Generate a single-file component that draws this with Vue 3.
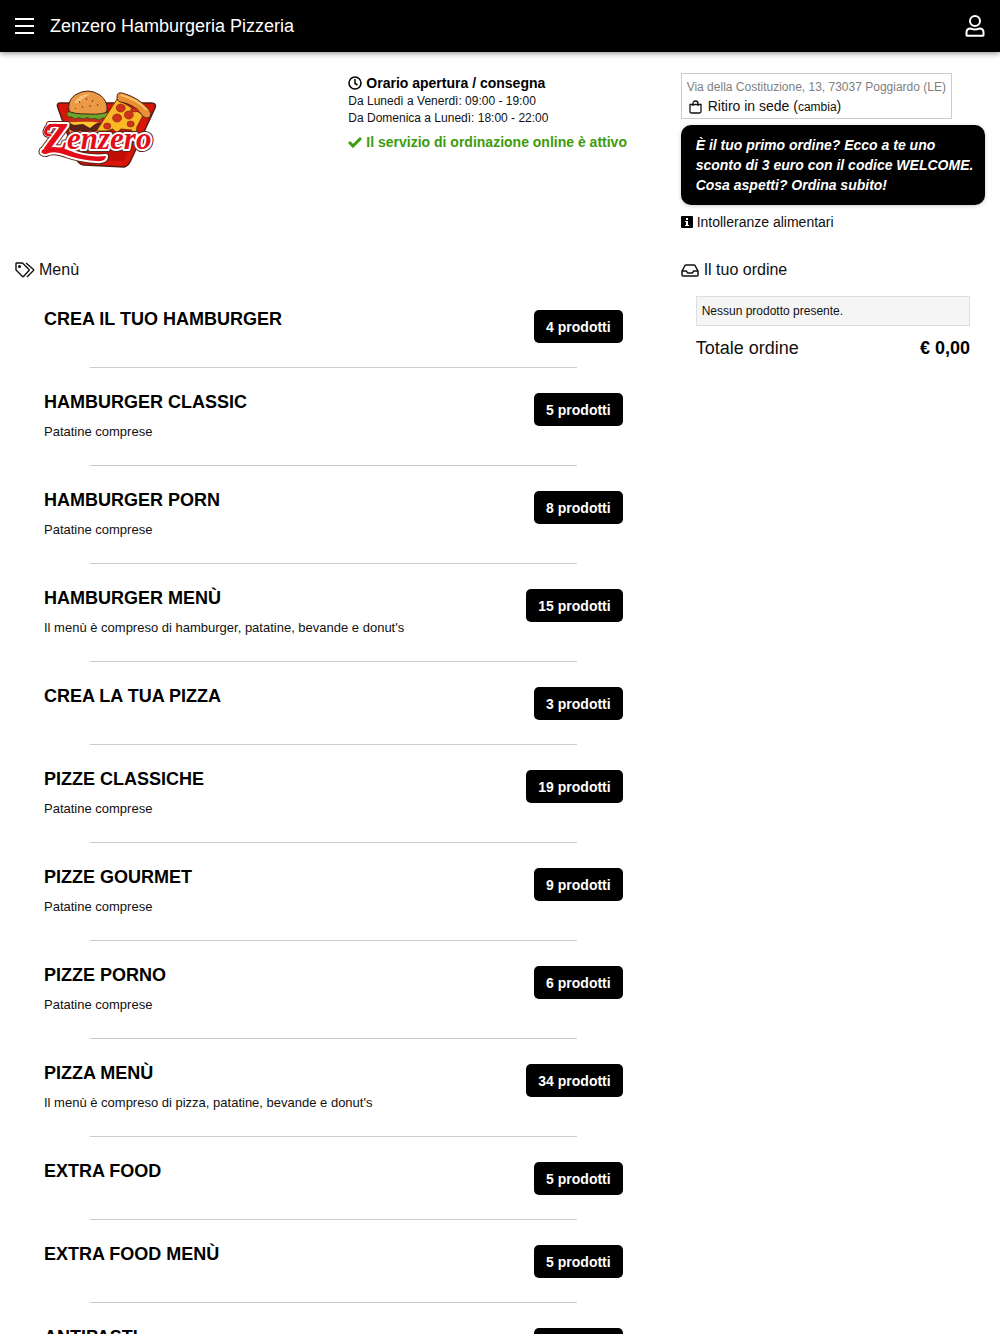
<script setup>
const hours = ['Da Lunedì a Venerdì: 09:00 - 19:00', 'Da Domenica a Lunedì: 18:00 - 22:00']

const categories = [
  { name: 'CREA IL TUO HAMBURGER', count: 4 },
  { name: 'HAMBURGER CLASSIC', note: 'Patatine comprese', count: 5 },
  { name: 'HAMBURGER PORN', note: 'Patatine comprese', count: 8 },
  { name: 'HAMBURGER MENÙ', note: "Il menù è compreso di hamburger, patatine, bevande e donut's", count: 15 },
  { name: 'CREA LA TUA PIZZA', count: 3 },
  { name: 'PIZZE CLASSICHE', note: 'Patatine comprese', count: 19 },
  { name: 'PIZZE GOURMET', note: 'Patatine comprese', count: 9 },
  { name: 'PIZZE PORNO', note: 'Patatine comprese', count: 6 },
  { name: 'PIZZA MENÙ', note: "Il menù è compreso di pizza, patatine, bevande e donut's", count: 34 },
  { name: 'EXTRA FOOD', count: 5 },
  { name: 'EXTRA FOOD MENÙ', count: 5 },
  { name: 'ANTIPASTI', count: 8 },
]
</script>

<template>
  <div class="page">
    <header class="topbar">
      <button class="icon-button" type="button" aria-label="Apri menu">
        <svg width="20" height="18" viewBox="0 0 20 18"><path d="M0 2h19M0 9h19M0 16h19" stroke="#fff" stroke-width="2" /></svg>
      </button>
      <h1 class="brand">Zenzero Hamburgeria Pizzeria</h1>
      <a class="account" href="#account" aria-label="Account">
        <svg width="20" height="22" viewBox="0 0 20 22" fill="none" stroke="#fff" stroke-width="2">
          <circle cx="10" cy="6" r="5" />
          <path d="M1.500 20v-2.600Q1.500 13.500 5.500 13.500Q8 14.400 10 14.400T14.500 13.500Q18.500 13.500 18.500 17.400V20Q18.500 20.700 18 20.700H2Q1.500 20.700 1.500 20Z" />
        </svg>
      </a>
    </header>

    <section class="intro">
      <a class="logo" href="#home" aria-label="Zenzero">
        <svg width="120" height="84" viewBox="0 0 120 84">
          <path d="M22 15Q18 15 20 20L38 70Q40 76 46 77L86 79Q90 78 92 74L117 20Q119 15 113 15Z" fill="#d91508" stroke="#551b12" stroke-width="1.500" />
          <path d="M28 20H108L86 73H49Z" fill="#c10e07" />
          <!-- hamburger -->
          <g transform="translate(3 0)">
            <path d="M28 38Q26 47 33 48H56Q63 46 60 38Z" fill="#e9953c" stroke="#4a2115" />
            <path d="M27 34H62Q64 41 58 43H31Q26 41 27 34Z" fill="#5a2118" />
            <path d="M27 34L61 33L54 36L49 40L42 36L33 37Z" fill="#ffc72e" />
            <path d="M27 30Q44 26 62 31V35Q44 32 27 34Z" fill="#c9281b" />
            <path d="M27 24Q44 22 66 25Q70 28 65 30Q61 29 58 32Q54 29 50 31Q46 28 42 31Q38 28 34 31Q31 28 28 29Q24 27 27 24Z" fill="#69a52a" stroke="#2b5519" stroke-width=".7" />
            <path d="M28 23Q26 13 34 7Q47-1 59 7Q67 13 66 23Q64 27 47 26Q31 26 28 23Z" fill="#eb9944" stroke="#4a2115" />
            <path d="M33 15Q39 5 50 6Q42 9 38 15Z" fill="#f8bf78" />
            <path d="M38 13l1 2M45 10l1 2M52 12l-1 2M57 16l-1 2M41 18l1 2M49 17v2M34 20l1 1" stroke="#7e3c16" />
          </g>
          <!-- pizza slice -->
          <g transform="translate(8 0) scale(.9 1)">
            <path d="M79 11L56 43L67 43L74 41L79 45L83 41L95 42L97 49L100 50L101 39L108 27Z" fill="#f9b824" stroke="#763112" />
            <path d="M79 8Q79 4 85 5Q104 10 115 22Q119 30 111 30Q107 29 104 24Q96 16 83 14Q78 13 79 8Z" fill="#e99035" stroke="#4a2115" />
            <path d="M83 7Q101 11 112 22" fill="none" stroke="#fbc170" stroke-width="2" />
            <g fill="#cf321b" stroke="#8d2414" stroke-width=".7">
              <ellipse cx="83" cy="20" rx="5" ry="4" /><ellipse cx="92" cy="27" rx="5" ry="4" />
              <ellipse cx="79" cy="30" rx="5" ry="4" /><ellipse cx="94" cy="36" rx="4" ry="3" />
              <ellipse cx="68" cy="38" rx="4" ry="3" /><ellipse cx="98" cy="22" rx="4" ry="2" />
            </g>
          </g>
          <!-- wordmark with its swash -->
          <g class="wordmark">
            <path class="rim" d="M12 47Q5 47 9 40Q13 36 22 38M4 62Q14 56 30 62Q48 70 68 68Q68 74 58 73Q42 72 28 67Q16 62 8 66Q2 66 4 62Z" />
            <text class="rim" x="6" y="62" font-size="40">Z</text>
            <text class="rim" x="29" y="61" font-size="31">enzero</text>
            <path class="halo" d="M12 47Q5 47 9 40Q13 36 22 38M4 62Q14 56 30 62Q48 70 68 68Q68 74 58 73Q42 72 28 67Q16 62 8 66Q2 66 4 62Z" />
            <text class="halo" x="6" y="62" font-size="40">Z</text>
            <text class="halo" x="29" y="61" font-size="31">enzero</text>
            <path class="ink" d="M12 47Q5 47 9 40Q13 36 22 38" />
            <path class="swash" d="M4 62Q14 56 30 62Q48 70 68 68Q68 74 58 73Q42 72 28 67Q16 62 8 66Q2 66 4 62Z" />
            <text x="6" y="62" font-size="40">Z</text>
            <text x="29" y="61" font-size="31">enzero</text>
          </g>
        </svg>
      </a>

      <div class="hours">
        <h2 class="hours-title">
          <svg width="14" height="14" viewBox="0 0 14 14" fill="none" stroke="#000" stroke-width="1.500"><circle cx="7" cy="7" r="6" /><path d="M7 3v4.500l2.500 1.500" /></svg>
          Orario apertura / consegna
        </h2>
        <p v-for="line in hours" :key="line" class="hours-line">{{ line }}</p>
        <p class="active">
          <svg width="14" height="12" viewBox="0 0 14 12"><path d="M1 6l4 4 8-8" fill="none" stroke="#3e9b0b" stroke-width="3" /></svg>
          Il servizio di ordinazione online è attivo
        </p>
      </div>

      <div class="info">
        <div class="pickup">
          <p class="address">Via della Costituzione, 13, 73037 Poggiardo (LE)</p>
          <p class="mode">
            <svg width="13" height="14" viewBox="0 0 13 14" fill="none" stroke="#111" stroke-width="1.300"><path d="M1 4.500h11v7q0 1.500-1.500 1.500h-8q-1.500 0-1.500-1.500ZM4 6V3.500Q4 1 6.500 1T9 3.500V6" /></svg>
            <span>Ritiro in sede (<a href="#cambia">cambia</a>)</span>
          </p>
        </div>
        <p class="promo">È il tuo primo ordine? Ecco a te uno sconto di 3 euro con il codice WELCOME. Cosa aspetti? Ordina subito!</p>
        <a class="allergens" href="#intolleranze">
          <svg width="12" height="12" viewBox="0 0 12 12"><rect width="12" height="12" rx="1" /><path d="M5 2h2v2H5zM4 5h3v4h1v1H4V9h1V6H4z" fill="#fff" /></svg>
          Intolleranze alimentari
        </a>
      </div>
    </section>

    <main class="content">
      <section class="menu">
        <h2 class="section-title">
          <svg width="20" height="16" viewBox="0 0 20 16" fill="none" stroke="#111" stroke-width="1.400" stroke-linejoin="round"><path d="M1 1.500Q1 1 1.500 1H7.500L14 7.500Q14.500 8 14 8.500L8.500 14.500Q8 15 7.500 14.500L1 8ZM11 1L18.500 7.500Q19 8 18.500 8.500L12 15" /><circle cx="4.500" cy="4.500" r=".8" fill="#111" /></svg>
          Menù
        </h2>
        <ul class="categories">
          <li v-for="category in categories" :key="category.name" class="category">
            <div class="row">
              <div>
                <h3 class="name">{{ category.name }}</h3>
                <p v-if="category.note" class="note">{{ category.note }}</p>
              </div>
              <button class="count" type="button">{{ category.count }} prodotti</button>
            </div>
            <hr class="rule" />
          </li>
        </ul>
      </section>

      <aside class="order">
        <h2 class="section-title">
          <svg width="19" height="13" viewBox="0 0 19 13" fill="none" stroke="#111" stroke-width="1.500" stroke-linejoin="round"><path d="M1 7L4 1.500Q4.300 1 5 1H13Q13.700 1 14 1.500L17 7V11Q17 12 16 12H2Q1 12 1 11ZM1 7H5.500L6.500 9H11.500L12.500 7H17" /></svg>
          Il tuo ordine
        </h2>
        <div class="cart">
          <p class="empty">Nessun prodotto presente.</p>
          <p class="total"><span>Totale ordine</span><strong>€ 0,00</strong></p>
        </div>
      </aside>
    </main>
  </div>
</template>

<style>
body {
  margin: 0;
  background: #fff;
}
</style>

<style scoped>
.page {
  color: #111;
  font-family: "Liberation Sans", Arial, sans-serif;
  font-size: 14px;
}
h1, h2, h3, p, ul {
  margin: 0;
  padding: 0;
}
a {
  color: inherit;
  text-decoration: none;
}
svg {
  display: block;
  flex: none;
}
.topbar {
  display: flex;
  align-items: center;
  gap: 15px;
  height: 52px;
  padding: 0 15px;
  background: #000;
  color: #fff;
  box-shadow: 0 1px 6px rgba(0, 0, 0, 0.5);
}
.icon-button {
  padding: 0;
  border: 0;
  background: none;
}
.brand {
  flex: 1;
  font-size: 18px;
  font-weight: 400;
}
.intro {
  display: grid;
  grid-template-columns: repeat(3, 1fr);
  padding-top: 21px;
}
.logo {
  padding: 15px 38px;
}
.wordmark {
  font-family: "Liberation Serif", serif;
  font-style: italic;
  font-weight: 700;
  fill: #e20d18;
}
.wordmark path {
  fill: none;
  stroke-linecap: round;
}
.wordmark .rim {
  stroke: #5b241b;
  stroke-width: 6;
  stroke-linejoin: round;
}
.wordmark .halo {
  stroke: #fff;
  stroke-width: 4;
  stroke-linejoin: round;
}
.wordmark .ink {
  stroke: #e20d18;
  stroke-width: 3;
}
.wordmark .swash {
  fill: #e20d18;
}
.hours {
  padding: 0 15px;
}
.hours-title,
.active {
  display: flex;
  align-items: center;
  gap: 4px;
  font-size: 14px;
  font-weight: 700;
  line-height: 20px;
  color: #000;
  white-space: nowrap;
}
.hours-line {
  font-size: 12px;
  line-height: 17px;
}
.active {
  margin-top: 5px;
  color: #3e9b0b;
}
.info {
  padding: 0 15px 0 14px;
}
.pickup {
  width: fit-content;
  padding: 4px 5px 1px;
  border: 1px solid #ccc;
}
.address {
  font-size: 12px;
  line-height: 18px;
  color: #808080;
}
.mode {
  display: flex;
  align-items: center;
  gap: 6px;
  padding-left: 2px;
  line-height: 20px;
}
.mode a {
  font-size: 12px;
}
.promo {
  margin-top: 6px;
  padding: 10px 10px 10px 15px;
  border-radius: 10px;
  background: #000;
  color: #fff;
  font-style: italic;
  font-weight: 700;
  line-height: 20px;
  box-shadow: 0 1px 4px rgba(0, 0, 0, 0.2);
}
.allergens {
  display: flex;
  align-items: center;
  gap: 4px;
  margin-top: 7px;
  line-height: 20px;
}
.content {
  display: grid;
  grid-template-columns: 2fr 1fr;
  padding-top: 28px;
}
.menu {
  padding: 0 15px;
}
.order {
  padding: 0 15px 0 14px;
}
.section-title {
  display: flex;
  align-items: center;
  gap: 4px;
  font-size: 16px;
  font-weight: 400;
  line-height: 20px;
}
.categories {
  margin: 5px 14px 0;
  list-style: none;
}
.row {
  display: flex;
  align-items: flex-start;
  justify-content: space-between;
  gap: 15px;
  padding: 25px 15px 24px;
}
.name {
  font-size: 18px;
  line-height: 18px;
  color: #000;
}
.note {
  margin-top: 12px;
  font-size: 13px;
  line-height: 18px;
}
.count {
  flex: none;
  height: 33px;
  padding: 0 12px;
  border: 0;
  border-radius: 5px;
  background: #000;
  color: #fff;
  font: 700 14px "Liberation Sans", Arial, sans-serif;
}
.rule {
  width: 80%;
  height: 1px;
  margin: 0 auto;
  border: 0;
  background: #ccc;
}
.cart {
  padding: 16px 15px;
}
.empty {
  padding: 5px;
  border: 1px solid #ddd;
  background: #f5f5f5;
  font-size: 12px;
  line-height: 18px;
}
.total {
  display: flex;
  justify-content: space-between;
  margin-top: 10px;
  font-size: 18px;
  line-height: 24px;
}
.total strong {
  color: #000;
}
</style>
